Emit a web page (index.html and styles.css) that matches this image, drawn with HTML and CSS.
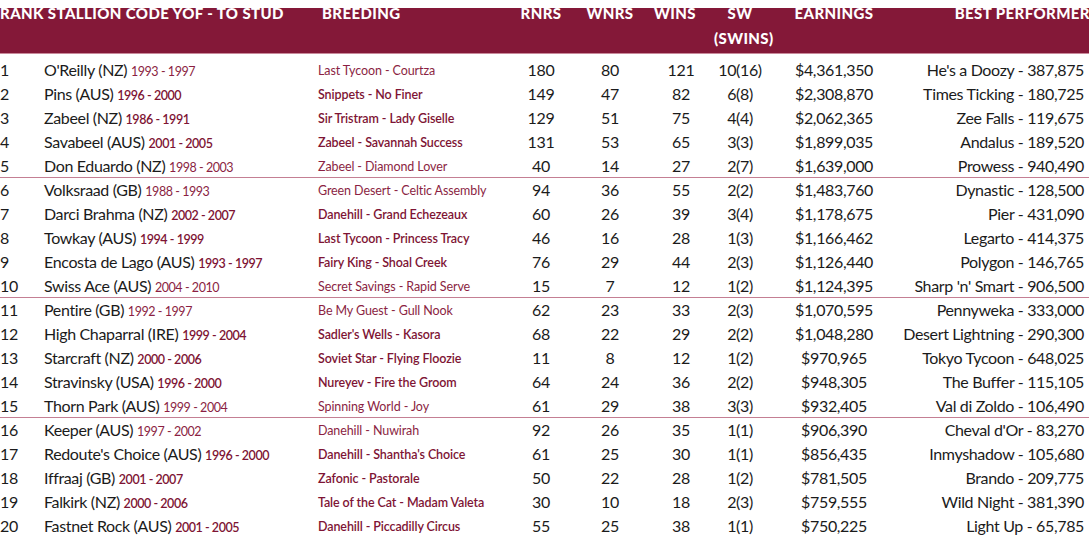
FILE: index.html
```html
<!DOCTYPE html>
<html>
<head>
<meta charset="utf-8">
<link rel="stylesheet" href="styles.css">
</head>
<body>
<div class="table">
  <div class="head">
    <div class="h-stallion">RANK STALLION CODE YOF - TO STUD</div>
    <div class="h-breed">BREEDING</div>
    <div class="h-num">RNRS</div>
    <div class="h-num">WNRS</div>
    <div class="h-num h-wins">WINS</div>
    <div class="h-num">SW<br>(SWINS)</div>
    <div class="h-num">EARNINGS</div>
    <div class="h-best">BEST PERFORMER</div>
  </div>
  <div class="body">
    <div class="row light"><div>1</div><div>O'Reilly (NZ) <span class="yrs">1993 - 1997</span></div><div class="breed">Last Tycoon - Courtza</div><div class="num">180</div><div class="num">80</div><div class="num">121</div><div class="num">10(16)</div><div class="num">$4,361,350</div><div class="best">He's a Doozy - 387,875</div></div>
    <div class="row"><div>2</div><div>Pins (AUS) <span class="yrs">1996 - 2000</span></div><div class="breed">Snippets - No Finer</div><div class="num">149</div><div class="num">47</div><div class="num">82</div><div class="num">6(8)</div><div class="num">$2,308,870</div><div class="best">Times Ticking - 180,725</div></div>
    <div class="row"><div>3</div><div>Zabeel (NZ) <span class="yrs">1986 - 1991</span></div><div class="breed">Sir Tristram - Lady Giselle</div><div class="num">129</div><div class="num">51</div><div class="num">75</div><div class="num">4(4)</div><div class="num">$2,062,365</div><div class="best">Zee Falls - 119,675</div></div>
    <div class="row"><div>4</div><div>Savabeel (AUS) <span class="yrs">2001 - 2005</span></div><div class="breed">Zabeel - Savannah Success</div><div class="num">131</div><div class="num">53</div><div class="num">65</div><div class="num">3(3)</div><div class="num">$1,899,035</div><div class="best">Andalus - 189,520</div></div>
    <div class="row light sep"><div>5</div><div>Don Eduardo (NZ) <span class="yrs">1998 - 2003</span></div><div class="breed">Zabeel - Diamond Lover</div><div class="num">40</div><div class="num">14</div><div class="num">27</div><div class="num">2(7)</div><div class="num">$1,639,000</div><div class="best">Prowess - 940,490</div></div>
    <div class="row light"><div>6</div><div>Volksraad (GB) <span class="yrs">1988 - 1993</span></div><div class="breed">Green Desert - Celtic Assembly</div><div class="num">94</div><div class="num">36</div><div class="num">55</div><div class="num">2(2)</div><div class="num">$1,483,760</div><div class="best">Dynastic - 128,500</div></div>
    <div class="row"><div>7</div><div>Darci Brahma (NZ) <span class="yrs">2002 - 2007</span></div><div class="breed">Danehill - Grand Echezeaux</div><div class="num">60</div><div class="num">26</div><div class="num">39</div><div class="num">3(4)</div><div class="num">$1,178,675</div><div class="best">Pier - 431,090</div></div>
    <div class="row"><div>8</div><div>Towkay (AUS) <span class="yrs">1994 - 1999</span></div><div class="breed">Last Tycoon - Princess Tracy</div><div class="num">46</div><div class="num">16</div><div class="num">28</div><div class="num">1(3)</div><div class="num">$1,166,462</div><div class="best">Legarto - 414,375</div></div>
    <div class="row"><div>9</div><div>Encosta de Lago (AUS) <span class="yrs">1993 - 1997</span></div><div class="breed">Fairy King - Shoal Creek</div><div class="num">76</div><div class="num">29</div><div class="num">44</div><div class="num">2(3)</div><div class="num">$1,126,440</div><div class="best">Polygon - 146,765</div></div>
    <div class="row light sep"><div>10</div><div>Swiss Ace (AUS) <span class="yrs">2004 - 2010</span></div><div class="breed">Secret Savings - Rapid Serve</div><div class="num">15</div><div class="num">7</div><div class="num">12</div><div class="num">1(2)</div><div class="num">$1,124,395</div><div class="best">Sharp 'n' Smart - 906,500</div></div>
    <div class="row light"><div>11</div><div>Pentire (GB) <span class="yrs">1992 - 1997</span></div><div class="breed">Be My Guest - Gull Nook</div><div class="num">62</div><div class="num">23</div><div class="num">33</div><div class="num">2(3)</div><div class="num">$1,070,595</div><div class="best">Pennyweka - 333,000</div></div>
    <div class="row"><div>12</div><div>High Chaparral (IRE) <span class="yrs">1999 - 2004</span></div><div class="breed">Sadler's Wells - Kasora</div><div class="num">68</div><div class="num">22</div><div class="num">29</div><div class="num">2(2)</div><div class="num">$1,048,280</div><div class="best">Desert Lightning - 290,300</div></div>
    <div class="row"><div>13</div><div>Starcraft (NZ) <span class="yrs">2000 - 2006</span></div><div class="breed">Soviet Star - Flying Floozie</div><div class="num">11</div><div class="num">8</div><div class="num">12</div><div class="num">1(2)</div><div class="num">$970,965</div><div class="best">Tokyo Tycoon - 648,025</div></div>
    <div class="row"><div>14</div><div>Stravinsky (USA) <span class="yrs">1996 - 2000</span></div><div class="breed">Nureyev - Fire the Groom</div><div class="num">64</div><div class="num">24</div><div class="num">36</div><div class="num">2(2)</div><div class="num">$948,305</div><div class="best">The Buffer - 115,105</div></div>
    <div class="row light sep"><div>15</div><div>Thorn Park (AUS) <span class="yrs">1999 - 2004</span></div><div class="breed">Spinning World - Joy</div><div class="num">61</div><div class="num">29</div><div class="num">38</div><div class="num">3(3)</div><div class="num">$932,405</div><div class="best">Val di Zoldo - 106,490</div></div>
    <div class="row light"><div>16</div><div>Keeper (AUS) <span class="yrs">1997 - 2002</span></div><div class="breed">Danehill - Nuwirah</div><div class="num">92</div><div class="num">26</div><div class="num">35</div><div class="num">1(1)</div><div class="num">$906,390</div><div class="best">Cheval d'Or - 83,270</div></div>
    <div class="row"><div>17</div><div>Redoute's Choice (AUS) <span class="yrs">1996 - 2000</span></div><div class="breed">Danehill - Shantha's Choice</div><div class="num">61</div><div class="num">25</div><div class="num">30</div><div class="num">1(1)</div><div class="num">$856,435</div><div class="best">Inmyshadow - 105,680</div></div>
    <div class="row"><div>18</div><div>Iffraaj (GB) <span class="yrs">2001 - 2007</span></div><div class="breed">Zafonic - Pastorale</div><div class="num">50</div><div class="num">22</div><div class="num">28</div><div class="num">1(2)</div><div class="num">$781,505</div><div class="best">Brando - 209,775</div></div>
    <div class="row"><div>19</div><div>Falkirk (NZ) <span class="yrs">2000 - 2006</span></div><div class="breed">Tale of the Cat - Madam Valeta</div><div class="num">30</div><div class="num">10</div><div class="num">18</div><div class="num">2(3)</div><div class="num">$759,555</div><div class="best">Wild Night - 381,390</div></div>
    <div class="row"><div>20</div><div>Fastnet Rock (AUS) <span class="yrs">2001 - 2005</span></div><div class="breed">Danehill - Piccadilly Circus</div><div class="num">55</div><div class="num">25</div><div class="num">38</div><div class="num">1(1)</div><div class="num">$750,225</div><div class="best">Light Up - 65,785</div></div>
  </div>
</div>
</body>
</html>
```
FILE: styles.css
```css
html, body {
  margin: 0;
  padding: 0;
  background: #ffffff;
}
body {
  font-family: Lato, "Liberation Sans", sans-serif;
  color: #1b1b1b;
  width: 1089px;
  overflow: hidden;
}
.table {
  width: 1089px;
}
.head,
.row {
  display: grid;
  grid-template-columns: 44px 274px 192px 62px 76px 66px 52px 136px 1fr;
}
.head {
  height: 52px;
  padding-top: 1px;
  background: linear-gradient(#ffffff 0 8px, #841838 8px);
  border-bottom: 1px solid #c98a9b;
  box-sizing: content-box;
  color: #ffffff;
  font-weight: 900;
  font-size: 15px;
  letter-spacing: 0.4px;
  line-height: 25px;
  margin-bottom: 4px;
  white-space: nowrap;
}
.h-stallion {
  grid-column: span 2;
}
.h-breed {
  padding-left: 4px;
}
.h-num {
  text-align: center;
}
.h-wins {
  padding-right: 12px;
}
.h-best {
  text-align: right;
  margin-right: -1px;
}
.row {
  height: 24px;
  box-sizing: border-box;
  font-size: 16px;
  letter-spacing: -0.35px;
  line-height: 24px;
  white-space: nowrap;
}
.row.sep {
  border-bottom: 1px solid #c47f93;
}
.yrs {
  font-size: 12.5px;
  letter-spacing: -0.45px;
  color: #7e1434;
  font-weight: 600;
}
.breed {
  font-size: 12.5px;
  letter-spacing: -0.1px;
  padding-top: 1px;
  color: #7e1434;
  font-weight: 600;
}
.row.light .yrs,
.row.light .breed {
  font-weight: 400;
  color: #8b1f43;
}
.num {
  text-align: center;
}
.best {
  text-align: right;
  padding-right: 5px;
}
```
